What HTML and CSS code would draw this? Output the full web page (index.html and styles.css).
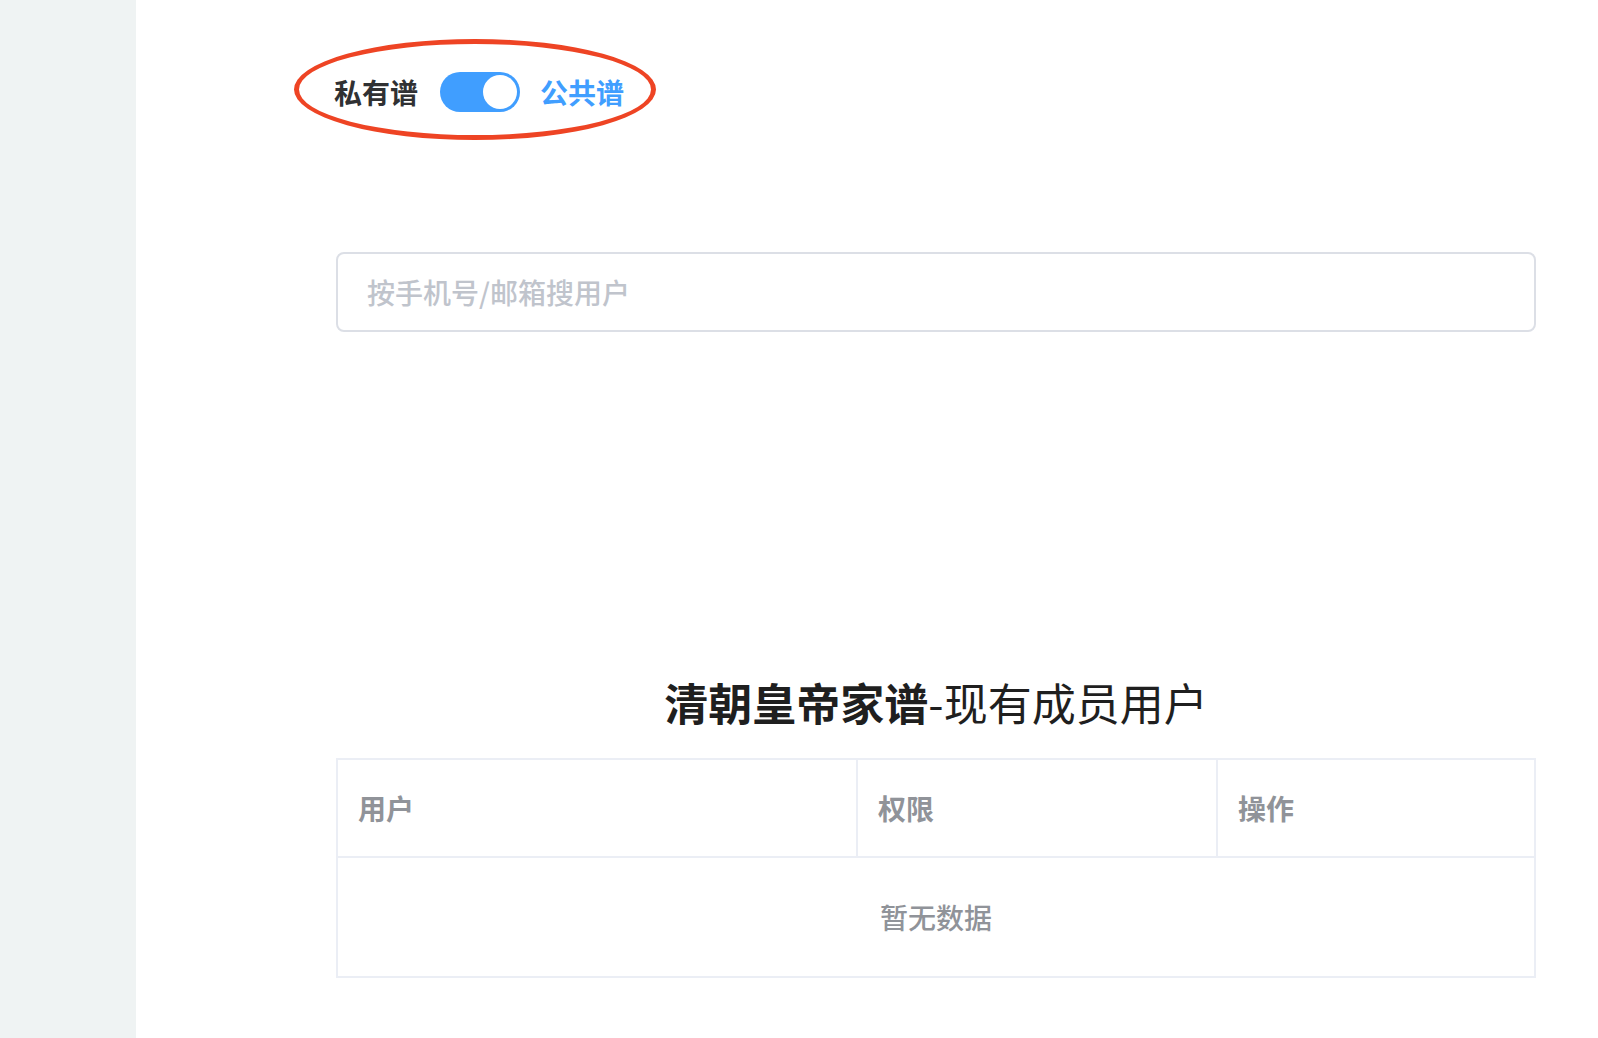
FILE: index.html
```html
<!DOCTYPE html>
<html lang="zh-CN">
<head>
<meta charset="utf-8">
<title>家谱成员</title>
<link rel="stylesheet" href="styles.css">
</head>
<body>
<div class="app">
  <aside class="sidebar"></aside>
  <main class="main">
    <div class="content">
      <div class="switch-row">
        <span class="annot"></span>
        <span class="switch-label">私有谱</span>
        <span class="switch on"><span class="knob"></span></span>
        <span class="switch-label active">公共谱</span>
      </div>

      <div class="search">
        <input class="search-input" type="text" placeholder="按手机号/邮箱搜用户">
      </div>

      <h2 class="title"><b>清朝皇帝家谱</b>-现有成员用户</h2>

      <div class="table">
        <div class="thead">
          <div class="th col-user">用户</div>
          <div class="th col-perm">权限</div>
          <div class="th col-op">操作</div>
        </div>
        <div class="empty">暂无数据</div>
      </div>
    </div>
  </main>
</div>
</body>
</html>
```

FILE: styles.css
```css
* { box-sizing: border-box; }

html, body {
  margin: 0;
  padding: 0;
  height: 100%;
  background: #ffffff;
  font-family: "Noto Sans CJK SC", "Noto Sans", "Liberation Sans", sans-serif;
  color: #303133;
}

.app {
  display: flex;
  min-height: 1038px;
}

.sidebar {
  width: 136px;
  flex: 0 0 136px;
  background: #eff3f3;
}

.main {
  flex: 1;
  background: #ffffff;
}

.content {
  margin-left: 200px;
  width: 1200px;
  padding-top: 72px;
}

/* switch */
.switch-row {
  position: relative;
  display: flex;
  align-items: center;
  height: 40px;
  margin-left: -2px;
}

.annot {
  position: absolute;
  left: -40px;
  top: -33px;
  width: 362px;
  height: 101px;
  border: 5px solid #ee4424;
  border-radius: 50%;
}

.switch-label {
  font-size: 28px;
  font-weight: 700;
  line-height: 40px;
  color: #303133;
}

.switch-label.active {
  color: #409eff;
}

.switch {
  position: relative;
  display: inline-block;
  width: 80px;
  height: 40px;
  border-radius: 20px;
  background: #dcdfe6;
  margin: 0 20px 0 22px;
}

.switch.on {
  background: #409eff;
}

.switch .knob {
  position: absolute;
  top: 3px;
  left: 3px;
  width: 34px;
  height: 34px;
  border-radius: 50%;
  background: #ffffff;
}

.switch.on .knob {
  left: 43px;
}

/* search */
.search {
  margin-top: 140px;
}

.search-input {
  display: block;
  width: 100%;
  height: 80px;
  border: 2px solid #dcdfe6;
  border-radius: 8px;
  padding: 0 29px;
  font-family: inherit;
  font-size: 28px;
  font-weight: 500;
  color: #606266;
  background: #fff;
  outline: none;
}

.search-input::placeholder {
  color: #c0c4cc;
}

/* title */
.title {
  margin: 340px 0 26px;
  text-align: center;
  font-size: 44px;
  line-height: 60px;
  font-weight: 400;
  color: #1f1f1f;
}

.title b {
  font-weight: 700;
}

/* table */
.table {
  border: 2px solid #ebeef5;
}

.thead {
  display: flex;
  height: 98px;
  border-bottom: 2px solid #ebeef5;
}

.th {
  display: flex;
  align-items: center;
  padding-left: 20px;
  font-size: 28px;
  font-weight: 700;
  color: #909399;
}

.col-user { width: 520px; border-right: 2px solid #ebeef5; }
.col-perm { width: 360px; border-right: 2px solid #ebeef5; }
.col-op { flex: 1; }

.empty {
  height: 118px;
  display: flex;
  align-items: center;
  justify-content: center;
  font-size: 28px;
  font-weight: 500;
  color: #909399;
}
```
